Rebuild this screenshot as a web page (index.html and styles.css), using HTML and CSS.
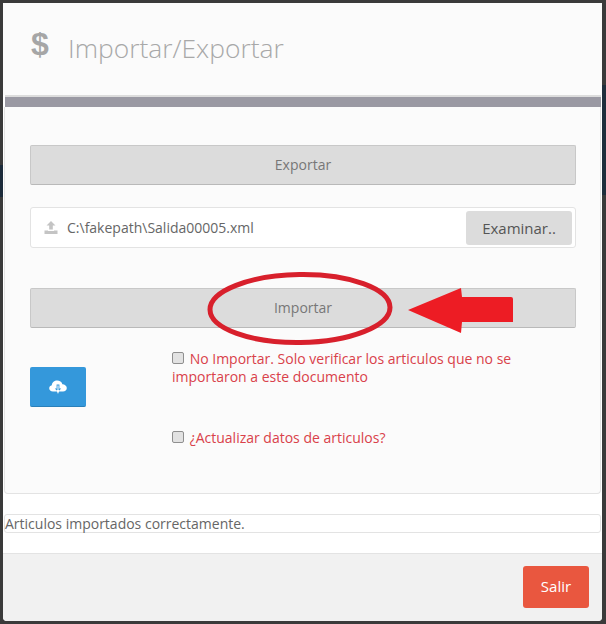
FILE: index.html
```html
<!DOCTYPE html>
<html>
<head>
    <meta charset="utf-8">
    <title>Importar/Exportar</title>
    <link rel="stylesheet" href="styles.css">
</head>
<body>
    <div class="modal">
        <!-- Header -->
        <div class="modal-header">
            <span class="title-icon">$</span>
            <h4 class="title">Importar/Exportar</h4>
        </div>

        <div class="modal-body">
            <div class="bar"></div>
            <div class="panel">
                <button class="btn-wide">Exportar</button>

                <div class="file-input">
                    <svg class="upload-icon" viewBox="0 0 14 13">
                        <path d="M7 0 L11.5 4.6 L8.8 4.6 L8.8 8.6 L5.2 8.6 L5.2 4.6 L2.5 4.6 Z" fill="#c4c4c4"/>
                        <path d="M0.5 9.6 L4 9.6 L4 10 L10 10 L10 9.6 L13.5 9.6 L13.5 13 L0.5 13 Z" fill="#c4c4c4"/>
                    </svg>
                    <span class="file-name">C:\fakepath\Salida00005.xml</span>
                    <button class="btn-browse">Examinar..</button>
                </div>

                <button class="btn-wide btn-import">Importar</button>

                <div class="options">
                    <button class="btn-cloud">
                        <svg viewBox="0 0 18 14" width="18" height="14">
                            <path d="M4 11.5 C1.6 11.5 0.2 10 0.2 8.3 C0.2 6.8 1.3 5.6 2.8 5.3 C3 2.6 5.4 0.6 8.2 0.6 C10.7 0.6 12.7 2 13.4 4.2 C15.8 4.3 17.8 5.9 17.8 8 C17.8 10 16.2 11.5 14 11.5 Z" fill="#fff"/>
                            <path d="M7.6 4.5 L10.4 4.5 L10.4 8.4 L12.2 8.4 L9 12 L5.8 8.4 L7.6 8.4 Z" fill="#3498db"/>
                            <path d="M8.5 5.5 L9.5 5.5 L9.5 10 L10.6 10 L9 14 L7.4 10 L8.5 10 Z" fill="#fff"/>
                        </svg>
                    </button>
                    <div class="checks">
                        <label class="check-label check-first"><input type="checkbox"> No Importar. Solo verificar los articulos que no se importaron a este documento</label>
                        <label class="check-label"><input type="checkbox"> ¿Actualizar datos de articulos?</label>
                    </div>
                </div>
            </div>

            <div class="message">Articulos importados correctamente.</div>
        </div>

        <div class="modal-footer">
            <button class="btn-exit">Salir</button>
        </div>
    </div>

    <!-- Red marks drawn over the screenshot -->
    <svg class="marks" viewBox="0 0 606 624">
        <ellipse cx="300" cy="308.5" rx="90" ry="34" fill="none" stroke="#d8202c" stroke-width="5" transform="rotate(-0.8 300 308.5)"/>
        <path d="M408 310 L461 288 L462 297 L511 297 Q513 297 513 299 L513 322 L462 322 L461 333 Z" fill="#ed1c24"/>
    </svg>
</body>
</html>
```

FILE: styles.css
```css
* {
    box-sizing: border-box;
}
body {
    margin: 0;
    width: 606px;
    height: 624px;
    padding: 3px 4px 3px 3px;
    background:
        linear-gradient(#1c2b3a, #1c2b3a) 0 165px / 3px 32px no-repeat,
        linear-gradient(#1f2e3c, #1f2e3c) 602px 85px / 4px 110px no-repeat,
        #3a3a3a;
    font-family: "Open Sans", sans-serif;
    font-size: 14px;
    color: #666;
    overflow: hidden;
    position: relative;
}
button {
    font-family: inherit;
}
.modal {
    height: 618px;
    display: flex;
    flex-direction: column;
    background: #fff;
    border-radius: 0 0 4px 4px;
}

/* Header */
.modal-header {
    height: 92px;
    flex: none;
    display: flex;
    align-items: center;
    padding: 0 0 2px 28px;
    background: #fbfbfb;
}
.title-icon {
    width: 37px;
    font-family: "Liberation Sans", sans-serif;
    font-weight: bold;
    font-size: 32px;
    color: #a6a6a6;
    margin-top: -8px;
}
.title {
    margin: 0;
    font-weight: 300;
    font-size: 26.4px;
    color: #a8a8a8;
}

/* Body */
.modal-body {
    flex: 1;
    padding: 0 1px;
}
.bar {
    height: 12px;
    background: #9a99a3;
    border-top: 2px solid #dcdcdc;
    margin: 0 0 0 1px;
}
.panel {
    height: 387px;
    padding: 38px 24px 0 25px;
    background: #fbfbfb;
    border: 1px solid #e3e3e3;
    border-top: 0;
    border-radius: 0 0 4px 4px;
}
.btn-wide {
    display: block;
    width: 100%;
    height: 40px;
    padding: 0 0 2px;
    background: #dcdcdc;
    border: 1px solid #c8c8c8;
    border-bottom-color: #b9b9b9;
    border-radius: 2px;
    font-size: 14px;
    color: #777;
}
.file-input {
    height: 41px;
    margin: 22px 0 40px;
    display: flex;
    align-items: center;
    padding: 0 3px 0 13px;
    background: #fff;
    border: 1px solid #e3e3e3;
    border-radius: 3px;
}
.upload-icon {
    width: 14px;
    height: 13px;
    flex: none;
}
.file-name {
    flex: 1;
    margin-left: 9px;
    color: #666;
}
.btn-browse {
    width: 106px;
    height: 34px;
    padding: 0;
    background: #dcdcdc;
    border: 0;
    border-radius: 3px;
    font-size: 15px;
    color: #555;
}
.options {
    display: flex;
    margin-top: 22px;
}
.btn-cloud {
    width: 56px;
    height: 40px;
    margin-top: 17px;
    flex: none;
    padding: 0;
    display: flex;
    align-items: center;
    justify-content: center;
    background: #3498db;
    border: 0;
    border-bottom: 1px solid #2a80b9;
    border-radius: 2px;
}
.checks {
    margin-left: 86px;
    width: 346px;
}
.check-label {
    display: block;
    line-height: 18px;
    color: #d9414a;
}
.check-first {
    margin-bottom: 43px;
}
.check-label input {
    appearance: none;
    width: 12px;
    height: 12px;
    margin: 0 2px 0 0;
    vertical-align: 0;
    background: #e2e2e2;
    border: 1px solid #8f8f8f;
    border-radius: 2px;
}
.message {
    height: 19px;
    margin: 20px 0 0 0;
    padding: 0;
    line-height: 18px;
    background: #fff;
    border: 1px solid #e3e3e3;
    border-radius: 3px;
    white-space: nowrap;
}

/* Footer */
.modal-footer {
    height: 68px;
    flex: none;
    display: flex;
    justify-content: flex-end;
    align-items: flex-start;
    padding: 12px 13px 0 0;
    background: #f1f1f1;
    border-top: 1px solid #e3e3e3;
    border-radius: 0 0 4px 4px;
}
.btn-exit {
    width: 66px;
    height: 42px;
    padding: 0 0 2px;
    background: #e9573f;
    border: 0;
    border-radius: 3px;
    font-size: 15px;
    color: #fff;
}

.marks {
    position: absolute;
    left: 0;
    top: 0;
    width: 606px;
    height: 624px;
}
```
